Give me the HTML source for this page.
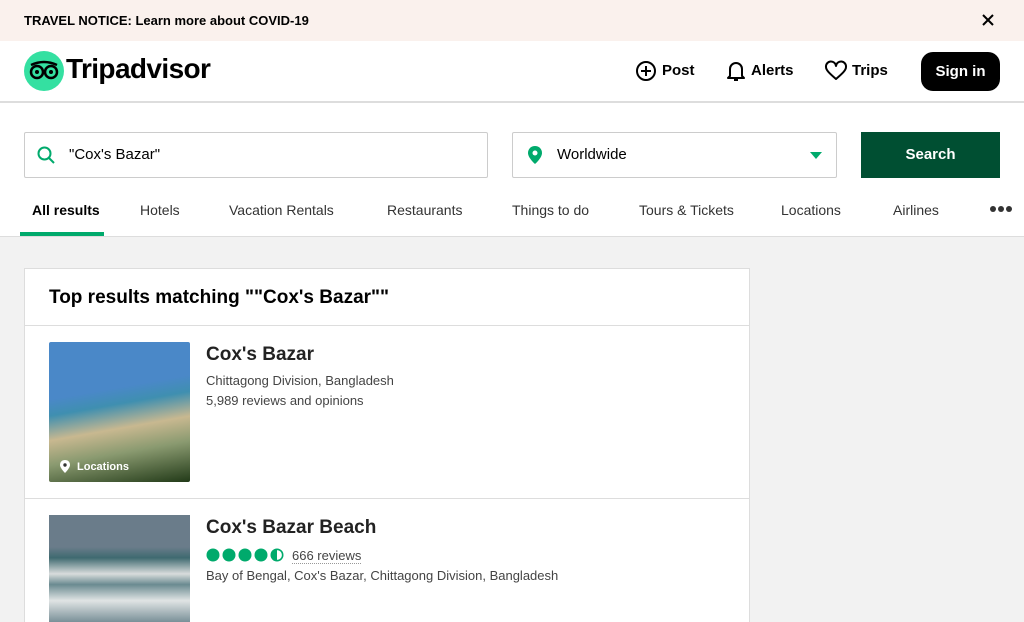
<!DOCTYPE html>
<html style="overflow:hidden;height:622px"><head><style>
*{box-sizing:border-box;margin:0;padding:0}
body{width:1024px;height:622px;overflow:hidden;font-family:"Liberation Sans",sans-serif;background:#f2f2f2;color:#000;position:relative}
.abs{position:absolute}
</style></head><body>
<div class="abs" style="left:0;top:0;width:1024px;height:41px;background:#faf1ed"></div>
<div class="abs" style="left:24px;top:13px;font-size:13px;font-weight:bold">TRAVEL NOTICE: Learn more about COVID-19</div>
<svg class="abs" style="left:982px;top:14px" width="12" height="12"><path d="M1 1L11 11M11 1L1 11" stroke="#000" stroke-width="2"/></svg>
<div class="abs" style="left:0;top:41px;width:1024px;height:196px;background:#fff;border-bottom:1px solid #ddd"></div>
<div class="abs" style="left:0;top:101px;width:1024px;height:2px;background:#ddd"></div>
<svg class="abs" style="left:24px;top:51px" width="40" height="40"><circle cx="20" cy="20" r="20" fill="#34e0a1"/><circle cx="13" cy="21" r="6" fill="none" stroke="#000" stroke-width="2.5"/><circle cx="27" cy="21" r="6" fill="none" stroke="#000" stroke-width="2.5"/><circle cx="13" cy="21" r="2" /><circle cx="27" cy="21" r="2"/><path d="M7 14 Q20 8 33 14" stroke="#000" stroke-width="2.5" fill="none"/></svg>
<div class="abs" style="left:66px;top:53px;font-size:28px;font-weight:bold;letter-spacing:-0.6px">Tripadvisor</div>
<svg class="abs" style="left:635px;top:60px" width="22" height="22"><circle cx="11" cy="11" r="9" stroke="#000" stroke-width="2" fill="none"/><path d="M11 6V16M6 11H16" stroke="#000" stroke-width="2"/></svg>
<div class="abs" style="left:662px;top:62px;font-size:15px;font-weight:bold">Post</div>
<svg class="abs" style="left:725px;top:59px" width="22" height="24"><path d="M5 17V10a6 6 0 0 1 12 0v7l2 2H3z" stroke="#000" stroke-width="2" fill="none" stroke-linejoin="round"/><path d="M9 21h4" stroke="#000" stroke-width="2"/></svg>
<div class="abs" style="left:751px;top:62px;font-size:15px;font-weight:bold">Alerts</div>
<svg class="abs" style="left:824px;top:60px" width="24" height="22"><path d="M12 19C5 13 2 10 2 7a5 5 0 0 1 10-1a5 5 0 0 1 10 1c0 3-3 6-10 12z" stroke="#000" stroke-width="2" fill="none" stroke-linejoin="round"/></svg>
<div class="abs" style="left:852px;top:62px;font-size:15px;font-weight:bold">Trips</div>
<div class="abs" style="left:921px;top:52px;width:79px;height:39px;background:#000;color:#fff;border-radius:12px;font-size:15px;font-weight:bold;text-align:center;line-height:39px">Sign in</div>
<div class="abs" style="left:24px;top:132px;width:464px;height:46px;border:1px solid #ccc;border-radius:2px"></div>
<svg class="abs" style="left:37px;top:146px" width="18" height="18"><circle cx="7.5" cy="7.5" r="6" stroke="#00aa6c" stroke-width="2" fill="none"/><path d="M12 12 L17 17" stroke="#00aa6c" stroke-width="2"/></svg>
<div class="abs" style="left:69px;top:146px;font-size:15px">"Cox's Bazar"</div>
<div class="abs" style="left:512px;top:132px;width:325px;height:46px;border:1px solid #ccc;border-radius:2px"></div>
<svg class="abs" style="left:528px;top:146px" width="14" height="18"><path d="M7 0C3 0 0 3 0 7c0 5 7 11 7 11s7-6 7-11c0-4-3-7-7-7z" fill="#00aa6c"/><circle cx="7" cy="7" r="2.5" fill="#fff"/></svg>
<div class="abs" style="left:557px;top:146px;font-size:15px">Worldwide</div>
<div class="abs" style="left:810px;top:152px;border-left:6px solid transparent;border-right:6px solid transparent;border-top:7px solid #00aa6c"></div>
<div class="abs" style="left:861px;top:132px;width:139px;height:46px;background:#004f32;color:#fff;font-size:15px;font-weight:bold;text-align:center;line-height:46px">Search</div>
<div class="abs" style="top:202px;left:0;font-size:14px;color:#333;width:1024px">
<span class="abs" style="left:32px;font-weight:bold;color:#000">All results</span>
<span class="abs" style="left:140px">Hotels</span>
<span class="abs" style="left:229px">Vacation Rentals</span>
<span class="abs" style="left:387px">Restaurants</span>
<span class="abs" style="left:512px">Things to do</span>
<span class="abs" style="left:639px">Tours &amp; Tickets</span>
<span class="abs" style="left:781px">Locations</span>
<span class="abs" style="left:893px">Airlines</span>
</div>
<svg class="abs" style="left:989px;top:204px" width="24" height="10"><g fill="#333"><circle cx="4" cy="5" r="3"/><circle cx="12" cy="5" r="3"/><circle cx="20" cy="5" r="3"/></g></svg>
<div class="abs" style="left:20px;top:232px;width:84px;height:4px;background:#00aa6c"></div>
<div class="abs" style="left:24px;top:268px;width:726px;height:354px;background:#fff;border:1px solid #ddd;border-bottom:none"></div>
<div class="abs" style="left:49px;top:287px;font-size:19px;font-weight:bold">Top results matching ""Cox's Bazar""</div>
<div class="abs" style="left:25px;top:325px;width:724px;height:1px;background:#ddd"></div>
<div class="abs" style="left:25px;top:498px;width:724px;height:1px;background:#ddd"></div>
<div class="abs" style="left:49px;top:342px;width:141px;height:140px;border-radius:2px;background:linear-gradient(170deg,#4a88c8 0%,#4a88c8 35%,#3f8fb0 45%,#c8b890 60%,#8a9a70 75%,#223a18 100%)"></div>
<svg class="abs" style="left:60px;top:460px" width="10" height="13"><path d="M5 0C2 0 0 2 0 5c0 3 5 8 5 8s5-5 5-8c0-3-2-5-5-5z" fill="#fff"/><circle cx="5" cy="5" r="1.7" fill="#333"/></svg>
<div class="abs" style="left:77px;top:461px;font-size:11px;color:#fff;font-weight:bold">Locations</div>
<div class="abs" style="left:49px;top:515px;width:141px;height:107px;background:linear-gradient(180deg,#6a7c8a 0%,#6a7c8a 30%,#3f6a70 40%,#d8dcdc 55%,#6a8a90 65%,#e0e4e4 80%,#7a9098 100%)"></div>
<div class="abs" style="left:206px;top:344px;font-size:19px;font-weight:bold;color:#222">Cox's Bazar</div>
<div class="abs" style="left:206px;top:373px;font-size:13px;color:#444">Chittagong Division, Bangladesh</div>
<div class="abs" style="left:206px;top:393px;font-size:13px;color:#444">5,989 reviews and opinions</div>
<div class="abs" style="left:206px;top:517px;font-size:19px;font-weight:bold;color:#222">Cox's Bazar Beach</div>
<svg class="abs" style="left:206px;top:548px" width="80" height="14"><g fill="#00aa6c"><circle cx="7" cy="7" r="6.5"/><circle cx="23" cy="7" r="6.5"/><circle cx="39" cy="7" r="6.5"/><circle cx="55" cy="7" r="6.5"/></g><circle cx="71" cy="7" r="5.7" fill="#fff" stroke="#00aa6c" stroke-width="1.6"/><path d="M71 1 A6 6 0 0 0 71 13Z" fill="#00aa6c"/></svg>
<div class="abs" style="left:292px;top:548px;font-size:13px;color:#444;border-bottom:1px dotted #999">666 reviews</div>
<div class="abs" style="left:206px;top:568px;font-size:13px;color:#444">Bay of Bengal, Cox's Bazar, Chittagong Division, Bangladesh</div>
</body></html>
